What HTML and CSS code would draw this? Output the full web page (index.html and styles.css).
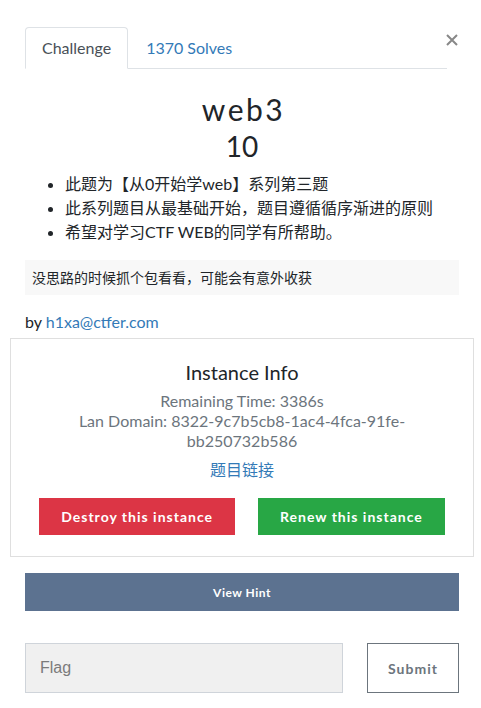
FILE: index.html
```html
<!DOCTYPE html>
<html lang="zh">
<head>
<meta charset="utf-8">
<title>web3</title>
<link rel="stylesheet" href="styles.css">
</head>
<body>
<div class="modal">
  <button class="close" aria-label="Close">
    <svg width="12" height="12" viewBox="0 0 12 12"><path d="M1 1 L11 11 M11 1 L1 11" stroke="#888" stroke-width="2" fill="none"/></svg>
  </button>
  <ul class="tabs">
    <li class="tab active">Challenge</li>
    <li class="tab link">1370 Solves</li>
  </ul>
  <h2 class="title">web3</h2>
  <h3 class="value">10</h3>
  <ul class="desc">
    <li>此题为【从0开始学web】系列第三题</li>
    <li>此系列题目从最基础开始，题目遵循循序渐进的原则</li>
    <li>希望对学习CTF WEB的同学有所帮助。</li>
  </ul>
  <div class="note">没思路的时候抓个包看看，可能会有意外收获</div>
  <p class="by">by <a class="link" href="#">h1xa@ctfer.com</a></p>
  <div class="card">
    <h4 class="card-title">Instance Info</h4>
    <div class="info">Remaining Time: 3386s</div>
    <div class="info">Lan Domain: 8322-9c7b5cb8-1ac4-4fca-91fe-<br>bb250732b586</div>
    <a class="link cjk-link" href="#">题目链接</a>
    <div class="actions">
      <button class="btn red">Destroy this instance</button>
      <button class="btn green">Renew this instance</button>
    </div>
  </div>
  <button class="hint">View Hint</button>
  <div class="submit-row">
    <div class="flag">Flag</div>
    <button class="submit">Submit</button>
  </div>
</div>
</body>
</html>
```
FILE: styles.css
```css
* { box-sizing: border-box; }
html, body { margin: 0; padding: 0; background: #fff; }
body {
  font-family: Lato, "Noto Sans CJK SC", sans-serif;
  color: #212529;
  width: 481px;
}
.modal {
  position: relative;
  padding: 27px 22px 0 25px;
}
.close {
  position: absolute;
  top: 34px;
  left: 446px;
  width: 12px;
  height: 12px;
  padding: 0;
  border: 0;
  background: none;
  display: flex;
}
.tabs {
  list-style: none;
  margin: 0 12px 0 0;
  padding: 0;
  display: flex;
  border-bottom: 1px solid #dee2e6;
}
.tab {
  font-size: 16px;
  line-height: 24px;
  padding: 8px 16px;
  margin-bottom: -1px;
  border: 1px solid transparent;
  border-radius: 4px 4px 0 0;
}
.tab.active {
  color: #495057;
  background: #fff;
  border-color: #dee2e6 #dee2e6 #fff;
}
.link { color: #337ab7; text-decoration: none; }
.tab.link { padding-left: 17px; }
.title {
  font-weight: 400;
  font-size: 30px;
  line-height: 36px;
  letter-spacing: 2.5px;
  text-align: center;
  margin: 22px 0 0 3px;
}
.value {
  font-weight: 400;
  font-size: 28px;
  line-height: 34px;
  text-align: center;
  margin: 2px 0 0;
}
.desc {
  margin: 9px 0 0;
  padding-left: 40px;
  font-size: 16px;
  line-height: 24px;
}
.note {
  margin-top: 16px;
  background: #f8f8f8;
  font-size: 14px;
  line-height: 20px;
  padding: 8px 7px 7px;
  color: #212529;
}
.by {
  margin: 15px 0 0;
  font-size: 16px;
  line-height: 24px;
}
.card {
  margin: 4px -15px 0 -15px;
  border: 1px solid #dfdfdf;
  text-align: center;
  padding: 21px 0 21px;
}
.card-title {
  font-weight: 400;
  font-size: 20px;
  line-height: 24px;
  margin: 0 0 7px;
}
.info {
  color: #6c757d;
  font-size: 16px;
  line-height: 20px;
}
.cjk-link {
  display: block;
  font-size: 16px;
  line-height: 20px;
  margin-top: 9px;
}
.actions {
  display: flex;
  justify-content: center;
  gap: 23px;
  margin-top: 18px;
}
.btn {
  font-family: Lato, sans-serif;
  font-weight: 700;
  font-size: 14px;
  letter-spacing: 1px;
  color: #fff;
  border: 0;
  height: 37px;
  padding: 0 22px;
}
.btn.red { background: #dc3545; }
.btn.green { background: #28a745; }
.hint {
  display: block;
  width: 100%;
  margin-top: 16px;
  height: 38px;
  border: 0;
  background: #5c7290;
  color: #fff;
  font-family: Lato, sans-serif;
  font-weight: 700;
  font-size: 12px;
  letter-spacing: 0.5px;
}
.submit-row {
  display: flex;
  justify-content: space-between;
  margin-top: 32px;
}
.flag {
  width: 318px;
  height: 50px;
  background: #f0f0f0;
  border: 1px solid #cfd4da;
  font-family: "Liberation Sans", Arial, sans-serif;
  font-size: 16px;
  color: #7b7b7b;
  display: flex;
  align-items: center;
  padding-left: 14px;
}
.submit {
  width: 92px;
  height: 50px;
  background: #fff;
  border: 1px solid #6c757d;
  color: #6c757d;
  font-family: Lato, sans-serif;
  font-weight: 700;
  font-size: 14px;
  letter-spacing: 1px;
}
```
